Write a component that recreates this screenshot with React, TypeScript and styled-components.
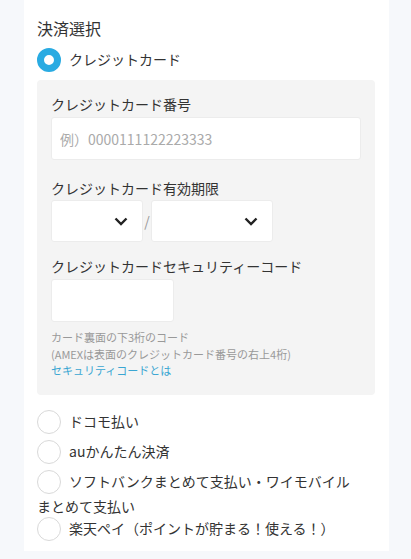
import React, { useState } from 'react';
import styled, { createGlobalStyle } from 'styled-components';

const GlobalStyle = createGlobalStyle`
  html, body {
    margin: 0;
    padding: 0;
    background: #f6f8fb;
  }
  body {
    font-family: "Noto Sans CJK JP", "Noto Sans", sans-serif;
    color: #333;
  }
`;

const Card = styled.section`
  margin: 0 22px 0 24px;
  background: #fff;
  padding: 16px 14px 6px 13px;
`;

const Title = styled.h2`
  margin: 0;
  font-size: 16px;
  font-weight: 400;
  line-height: 24px;
`;

const Option = styled.label<{ $first?: boolean }>`
  display: block;
  font-size: 14px;
  line-height: 17px;
  margin-top: ${(p) => (p.$first ? '6px' : '0')};
  padding-right: 22px;
  cursor: pointer;
`;

const RadioMark = styled.span<{ $checked: boolean }>`
  display: inline-block;
  box-sizing: border-box;
  width: 24px;
  height: 24px;
  margin: 3px 8px 3px 0;
  vertical-align: middle;
  border-radius: 50%;
  border: ${(p) => (p.$checked ? '7.5px solid #29abe2' : '1px solid #d9d9d9')};
  background: #fff;
  position: relative;
  top: -1px;
`;

const Panel = styled.div`
  margin: 4px 0 13px;
  background: #f4f4f4;
  border-radius: 4px;
  padding: 12px 14px 16px;
`;

const Label = styled.div<{ $gap?: number }>`
  font-size: 14px;
  line-height: 24px;
  margin-top: ${(p) => p.$gap ?? 0}px;
`;

const TextInput = styled.input<{ $width?: string }>`
  display: block;
  box-sizing: border-box;
  width: ${(p) => p.$width ?? '100%'};
  height: 43px;
  margin-top: 1px;
  padding: 0 8px;
  border: 1px solid #ececec;
  border-radius: 3px;
  background: #fff;
  font-family: inherit;
  font-size: 14px;
  color: #333;
  outline: none;
  &::placeholder {
    color: #aaa;
  }
`;

const ExpiryRow = styled.div`
  display: flex;
  align-items: center;
`;

const SelectBox = styled.div<{ $width: number }>`
  box-sizing: border-box;
  width: ${(p) => p.$width}px;
  height: 42px;
  border: 1px solid #ececec;
  border-radius: 3px;
  background: #fff;
  display: flex;
  align-items: center;
  justify-content: flex-end;
  padding-right: 14px;
`;

const Slash = styled.span`
  width: 8px;
  text-align: center;
  color: #999;
  font-size: 14px;
`;

const Note = styled.p`
  margin: 7px 0 0;
  font-size: 11px;
  line-height: 16.5px;
  color: #999;
`;

const HelpLink = styled.a`
  color: #3aa6d2;
  text-decoration: none;
`;

const Chevron = () => (
  <svg width="14" height="9" viewBox="0 0 14 9">
    <path d="M1.5 1.5 7 7l5.5-5.5" fill="none" stroke="#222" strokeWidth="2.4" />
  </svg>
);

const others = [
  'ドコモ払い',
  'auかんたん決済',
  'ソフトバンクまとめて支払い・ワイモバイルまとめて支払い',
  '楽天ペイ（ポイントが貯まる！使える！）',
];

const App = () => {
  const [selected, setSelected] = useState('credit');

  return (
    <React.Fragment>
      <GlobalStyle />
      <Card>
        <Title>決済選択</Title>
        <Option $first onClick={() => setSelected('credit')}>
          <RadioMark $checked={selected === 'credit'} />
          クレジットカード
        </Option>
        <Panel>
          <Label>クレジットカード番号</Label>
          <TextInput placeholder="例）0000111122223333" />
          <Label $gap={16}>クレジットカード有効期限</Label>
          <ExpiryRow>
            <SelectBox $width={92}>
              <Chevron />
            </SelectBox>
            <Slash>/</Slash>
            <SelectBox $width={122}>
              <Chevron />
            </SelectBox>
          </ExpiryRow>
          <Label $gap={12}>クレジットカードセキュリティーコード</Label>
          <TextInput $width="123px" />
          <Note>
            カード裏面の下3桁のコード
            <br />
            (AMEXは表面のクレジットカード番号の右上4桁)
            <br />
            <HelpLink href="#">セキュリティコードとは</HelpLink>
          </Note>
        </Panel>
        {others.map((name) => (
          <Option key={name} onClick={() => setSelected(name)}>
            <RadioMark $checked={selected === name} />
            {name}
          </Option>
        ))}
      </Card>
    </React.Fragment>
  );
};

export default App;
